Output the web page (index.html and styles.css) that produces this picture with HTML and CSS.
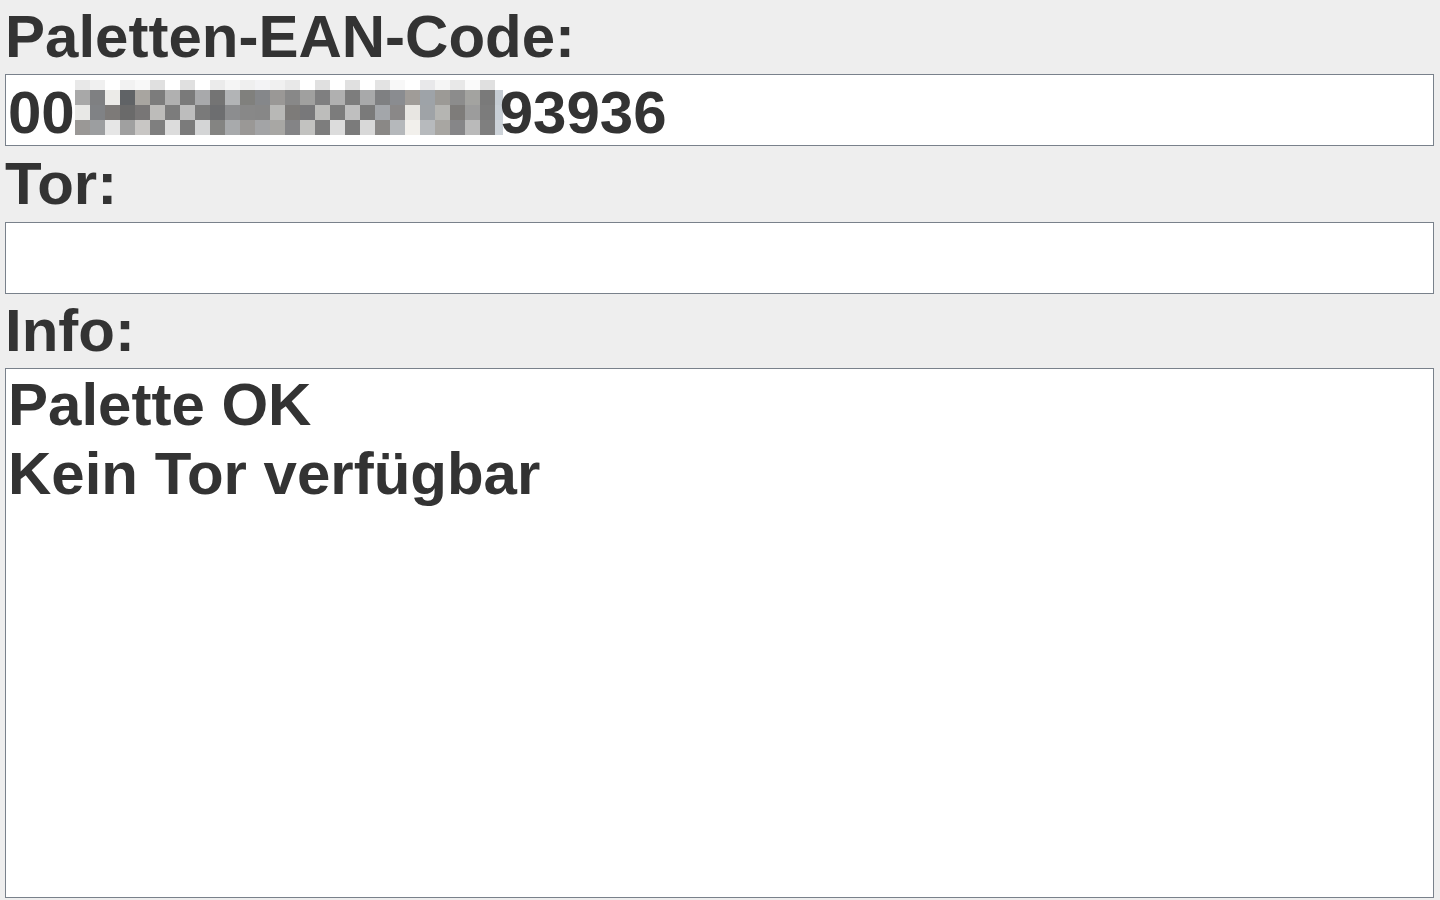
FILE: index.html
```html
<!DOCTYPE html>
<html lang="de">
<head>
  <meta charset="UTF-8" />
  <meta name="viewport" content="width=device-width, initial-scale=1.0" />
  <title>Palette scannen</title>
  <link rel="stylesheet" href="styles.css">
</head>
<body>
  <div class="form">
    <label class="label">Paletten-EAN-Code:</label>
    <div class="field">00<svg class="mosaic" width="428" height="55" viewBox="0 0 428 55" id="mosaic"></svg>93936</div>

    <label class="label label-tor">Tor:</label>
    <div class="field"></div>

    <label class="label">Info:</label>
    <div class="field info">Palette OK<br>Kein Tor verfügbar</div>
  </div>

  <script>
    // blurred part of the code, 4 rows of grey blocks
    const rows = [
      ['e8e8e8','f0f0f0','ffffff','f2f2f2','f8f8f8','e0e0e0','ffffff','e0e0e0','ffffff','ebebeb','f5f5f5','efefef','f3f3f5','f0f0f0','e8e8e8','ffffff','e0e0e0','ffffff','e0e0e0','ffffff','e3e3e3','f8f8f8','ffffff','e8e8ea','f5f5f5','e8e8e8','fafafa','e0e0e0','ffffff'],
      ['a8a8a8','7f8082','ecebe8','606366','a8a5a0','7c7c7c','b0b0b0','7a7a7a','a8a9ab','747474','b2b4b6','80807d','85878a','9a9896','888888','a0a09f','7f7f80','b0b0b0','7d7d7d','a8a9aa','7f8082','8a8c90','a09c98','9ea3a8','9c9a96','8c8c8c','a3a3a0','7a7a7a','c5ccd3'],
      ['e8e8e6','808285','7d7a78','6a6a6a','787676','bdbcba','7c7c7c','bdbdbd','7a7a7a','6d6e70','8c8d8f','888888','878787','b8b8b6','7d7b79','78787a','bdbdbb','7c7c7c','bfbfbf','7a7a7a','a3a6aa','8a8888','e8e6e2','9fa3a7','b5b5b2','7e7c7a','9c9c9c','7c7c7c','c8cfd6'],
      ['9a9896','9c9ea0','e6e6e6','a0a0a0','c8c6c4','7f7f7f','dcdcdc','7b7b7b','d4d5d6','848482','a8aaac','9a9896','a3a4a6','a8a7a4','848486','c2c2c0','7d7d7d','dcdcdc','7b7b7b','d8d8d8','8a8886','b5b8bb','f2f0ec','b7babd','a8a6a2','868688','bababa','7f7f7f','cdd3d9']
    ];
    const heights = [10, 15, 15, 15];
    let svg = '';
    let y = 0;
    rows.forEach((row, r) => {
      row.forEach((c, i) => {
        const w = i === 28 ? 8 : 15;
        svg += `<rect x="${i * 15}" y="${y}" width="${w}" height="${heights[r]}" fill="#${c}"/>`;
      });
      y += heights[r];
    });
    document.getElementById('mosaic').innerHTML = svg;
  </script>
</body>
</html>
```

FILE: styles.css
```css
body, html {
  margin: 0;
  padding: 0;
  background: #eeeeee;
  font-family: 'Liberation Sans', Arial, sans-serif;
  color: #333333;
}
.form {
  padding: 0 6px 0 5px;
}
.label {
  display: block;
  font-size: 60px;
  font-weight: bold;
  line-height: 74px;
}
.label-tor {
  line-height: 76px;
}
.field {
  box-sizing: border-box;
  height: 72px;
  padding: 3px 2px 1px;
  background: #fff;
  border: 1px solid #79818b;
  font-size: 60px;
  font-weight: bold;
  line-height: 69px;
  white-space: nowrap;
  overflow: hidden;
}
.mosaic {
  vertical-align: -2px;
  margin-right: -3px;
}
.info {
  height: 530px;
  padding: 1px 2px;
  white-space: normal;
}
```
